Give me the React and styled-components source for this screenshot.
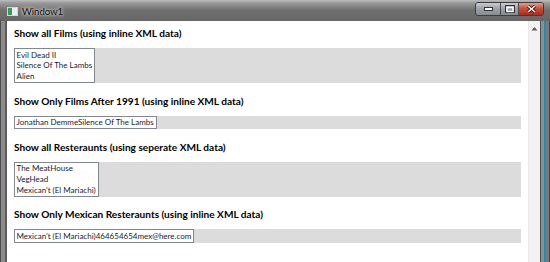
import React from "react";
import styled, { createGlobalStyle } from "styled-components";

const Global = createGlobalStyle`
  html, body {
    margin: 0;
    padding: 0;
    overflow: hidden;
  }
  body {
    font-family: Lato, "Open Sans", "Liberation Sans", sans-serif;
  }
`;

const Frame = styled.div`
  width: 550px;
  height: 262px;
  display: flex;
  flex-direction: column;
  background: linear-gradient(90deg, #6d6d6d 0%, #7b7b7b 30%, #656565 60%, #707070 100%);
  overflow: hidden;
`;

const TitleBar = styled.div`
  height: 21px;
  display: flex;
  align-items: flex-start;
  padding-left: 7px;
  background: linear-gradient(180deg, #bdbdbd 0px, #9a9a9a 3px, #707070 10px, #666 21px);
`;

const AppIcon = styled.div`
  width: 9px;
  height: 7px;
  margin-top: 7px;
  border: 1px solid #cfd6de;
  background: linear-gradient(90deg, #3a9a5a 0 40%, #e8eef4 40% 100%);
`;

const Caption = styled.span`
  margin-left: 4px;
  margin-top: 6px;
  font-size: 9.5px;
  line-height: 11px;
  color: #111;
  text-shadow: 0 0 5px #ddd, 0 0 3px #eee;
`;

const Spacer = styled.div`
  flex: 1;
`;

const Buttons = styled.div`
  display: flex;
  margin-top: 2px;
  margin-right: 6px;
  height: 12px;
  border: 1px solid #3c3c3c;
  border-radius: 3px;
  overflow: hidden;
`;

const CapButton = styled.div`
  width: ${(p) => p.$w}px;
  display: flex;
  align-items: center;
  justify-content: center;
  background: ${(p) =>
    p.$close
      ? "linear-gradient(180deg, #e0a090 0%, #c8503c 45%, #b02a16 100%)"
      : "linear-gradient(180deg, #c9cdd2 0%, #9ea3a9 45%, #878c92 100%)"};
  & + & {
    border-left: 1px solid #4a4a4a;
  }
`;

const Body = styled.div`
  flex: 1;
  display: flex;
`;

const LeftEdge = styled.div`
  width: 7px;
  background: linear-gradient(90deg, #4c4c4c 0 1px, #8b8b8b 1px 5px, #5c5c5c 5px 7px);
`;

const RightEdge = styled.div`
  width: 10px;
  background: linear-gradient(90deg, #4e4e4e 0 1px, #8e8e8e 1px 4px, #1b8fb6 4px 6px, #7a7a7a 6px 9px, #444 9px);
`;

const Client = styled.div`
  flex: 1;
  display: flex;
  background: #fff;
`;

const Content = styled.div`
  flex: 1;
  padding: 6px 7px 0 7px;
  display: flex;
  flex-direction: column;
`;

const Scrollbar = styled.div`
  width: 11px;
  background: #f2f2f2;
  border-left: 1px solid #e9e9e9;
  display: flex;
  justify-content: center;
  padding-top: 5px;
`;

const Heading = styled.div`
  font-weight: 700;
  font-size: 10.1px;
  line-height: 12px;
  color: #000;
  white-space: nowrap;
  margin: ${(p) => (p.$first ? "0" : "11.5px")} 0 9px;
`;

const Band = styled.div`
  background: #dcdcdc;
  display: flex;
`;

const ListBox = styled.div`
  background: #fff;
  border: 1px solid #828790;
  padding: 0.5px 2px 0.5px 1.5px;
  display: flex;
  flex-direction: column;
  font-size: 8px;
  line-height: 10.67px;
  color: #1a1a33;
`;

const Item = styled.span`
  white-space: nowrap;
`;

const UpArrow = () => (
  <svg width="7" height="5" viewBox="0 0 7 5">
    <path d="M0.5 4.5 L3.5 1 L6.5 4.5 Z" fill="#606060" />
  </svg>
);

const sections = [
  { title: "Show all Films (using inline XML data)", items: ["Evil Dead II", "Silence Of The Lambs", "Alien"] },
  { title: "Show Only Films After 1991 (using inline XML data)", items: ["Jonathan DemmeSilence Of The Lambs"] },
  { title: "Show all Resteraunts (using seperate XML data)", items: ["The MeatHouse", "VegHead", "Mexican't (El Mariachi)"] },
  { title: "Show Only Mexican Resteraunts (using inline XML data)", items: ["Mexican't (El Mariachi)464654654mex@here.com"] },
];

export default function App() {
  return (
    <>
      <Global />
      <Frame>
        <TitleBar>
          <AppIcon />
          <Caption>Window1</Caption>
          <Spacer />
          <Buttons>
            <CapButton $w={24}>
              <svg width="9" height="4" viewBox="0 0 9 4">
                <rect x="0.5" y="0.5" width="8" height="3" fill="#fff" stroke="#333" strokeWidth="1" />
              </svg>
            </CapButton>
            <CapButton $w={17}>
              <svg width="10" height="8" viewBox="0 0 10 8">
                <rect x="0.5" y="0.5" width="9" height="7" fill="none" stroke="#333" strokeWidth="1" />
                <rect x="2" y="2.5" width="6" height="4" fill="none" stroke="#fff" strokeWidth="1.4" />
              </svg>
            </CapButton>
            <CapButton $w={24} $close>
              <svg width="9" height="8" viewBox="0 0 9 8">
                <path d="M1 1 L8 7 M8 1 L1 7" stroke="#3a0a00" strokeWidth="3" />
                <path d="M1 1 L8 7 M8 1 L1 7" stroke="#fff" strokeWidth="1.6" />
              </svg>
            </CapButton>
          </Buttons>
        </TitleBar>
        <Body>
          <LeftEdge />
          <Client>
            <Content>
              {sections.map((s, i) => (
                <React.Fragment key={s.title}>
                  <Heading $first={i === 0}>{s.title}</Heading>
                  <Band>
                    <ListBox>
                      {s.items.map((it) => (
                        <Item key={it}>{it}</Item>
                      ))}
                    </ListBox>
                  </Band>
                </React.Fragment>
              ))}
            </Content>
            <Scrollbar>
              <UpArrow />
            </Scrollbar>
          </Client>
          <RightEdge />
        </Body>
      </Frame>
    </>
  );
}
